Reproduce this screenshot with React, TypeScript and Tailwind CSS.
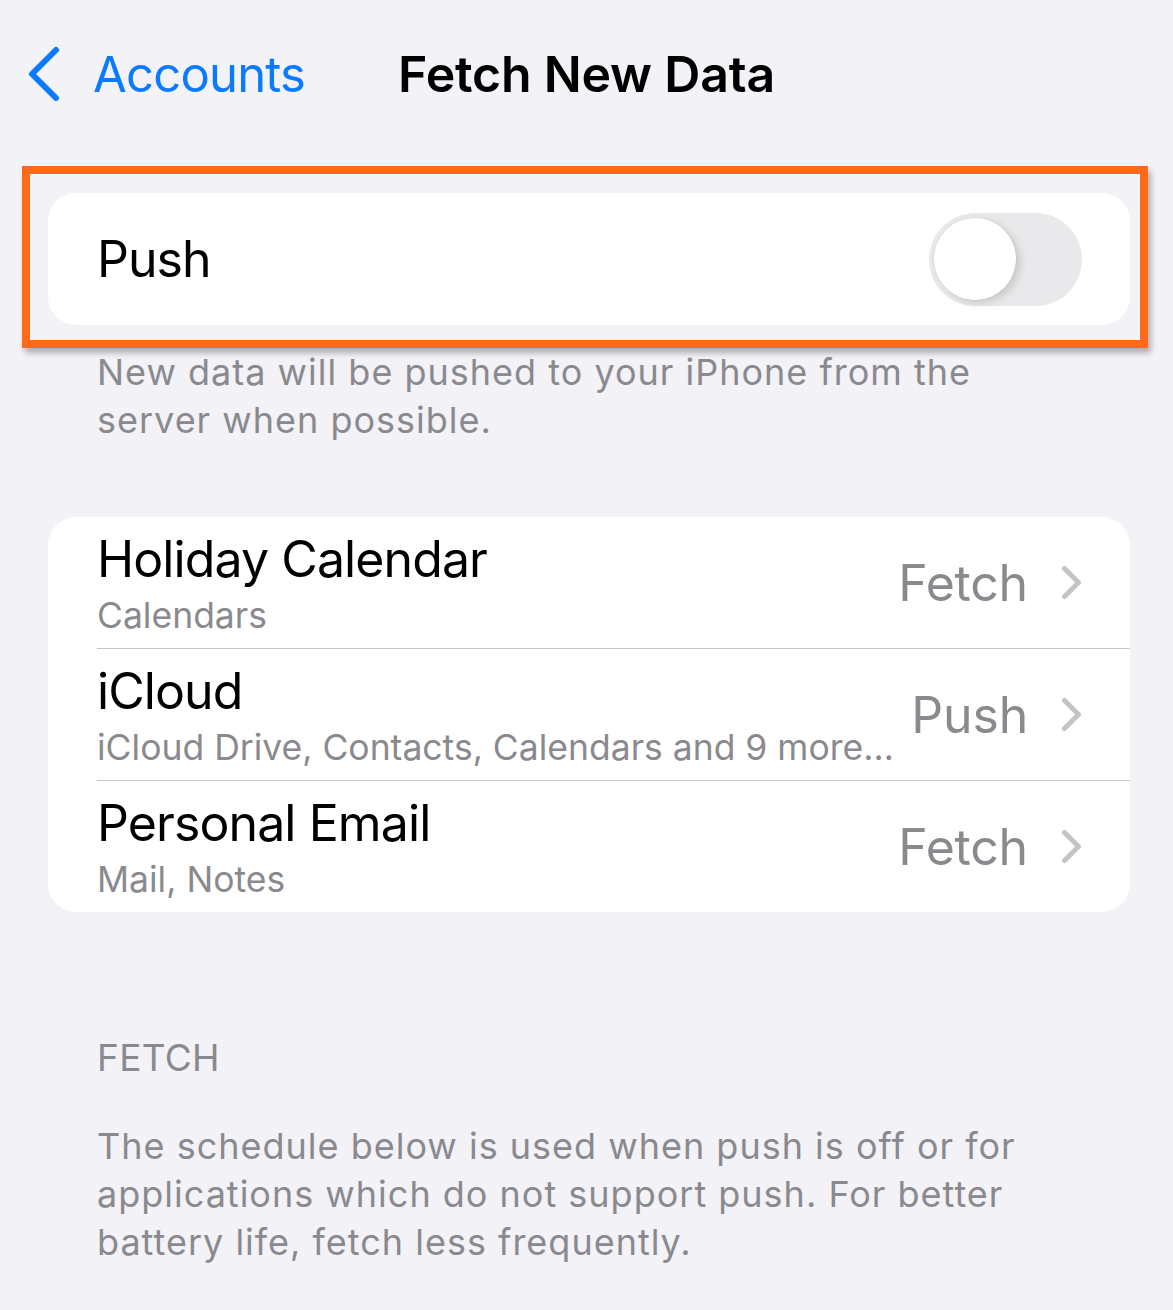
import React from "react";

type Account = {
  name: string;
  detail: string;
  mode: "Fetch" | "Push";
};

const accounts: Account[] = [
  { name: "Holiday Calendar", detail: "Calendars", mode: "Fetch" },
  {
    name: "iCloud",
    detail: "iCloud Drive, Contacts, Calendars and 9 more…",
    mode: "Push",
  },
  { name: "Personal Email", detail: "Mail, Notes", mode: "Fetch" },
];

function BackChevron() {
  return (
    <svg width="34" height="56" viewBox="0 0 34 56" fill="none">
      <path
        d="M29 4 L5 28 L29 52"
        stroke="#0a7aff"
        strokeWidth="6"
        strokeLinecap="round"
        strokeLinejoin="round"
      />
    </svg>
  );
}

function RowChevron() {
  return (
    <svg width="21" height="35" viewBox="0 0 21 35" fill="none">
      <path
        d="M3.5 3.5 L17.5 17.5 L3.5 31.5"
        stroke="#c4c4c7"
        strokeWidth="5"
        strokeLinecap="round"
        strokeLinejoin="round"
      />
    </svg>
  );
}

function Toggle({ on }: { on: boolean }) {
  return (
    <div
      className={`flex h-[93px] w-[153px] items-center rounded-full p-[5px] ${
        on ? "justify-end bg-[#34c759]" : "justify-start bg-[#e9e9eb]"
      }`}
    >
      <div className="h-[82px] w-[82px] rounded-full bg-white shadow-[4px_3px_8px_rgba(0,0,0,0.14),0_0_0_1px_rgba(0,0,0,0.03)]" />
    </div>
  );
}

export default function App() {
  return (
    <div className="min-h-screen w-full bg-[#f2f2f7] pb-10 font-['Inter',sans-serif] antialiased">
      <header className="grid h-[148px] grid-cols-[1fr_auto_1fr] items-center">
        <div className="flex items-center pl-[27px]">
          <BackChevron />
          <span className="ml-[32px] text-[49px] leading-none tracking-[-0.8px] text-[#0a7aff]">
            Accounts
          </span>
        </div>
        <h1 className="text-[50px] font-semibold leading-none tracking-[-0.2px] text-black">
          Fetch New Data
        </h1>
        <div />
      </header>

      {/* highlighted push switch */}
      <div className="ml-[22px] mt-[18px] w-[1126px] border-[8px] border-[#fd6a1c] pb-[15px] pl-[18px] pr-[10px] pt-[19px] shadow-[3px_5px_6px_rgba(0,0,0,0.28)]">
        <div className="flex h-[132px] items-center justify-between rounded-[28px] bg-white pl-[49px] pr-[48px]">
          <span className="text-[50px] leading-none tracking-[-1px] text-black">
            Push
          </span>
          <Toggle on={false} />
        </div>
      </div>

      <p className="ml-[97px] w-[910px] text-[36px] leading-[48px] tracking-[1px] text-[#8a8a8e]">
        New data will be pushed to your iPhone from the server when possible.
      </p>

      <div className="ml-[48px] mt-[73px] w-[1082px] overflow-hidden rounded-[28px] bg-white">
        {accounts.map((account, i) => (
          <div key={account.name} className="flex pl-[49px]">
            <div
              className={`flex min-w-0 flex-1 items-center pr-[48px] ${
                i < accounts.length - 1
                  ? "h-[132px] border-b border-[#c6c6c8]"
                  : "h-[131px]"
              }`}
            >
              <div className="flex min-w-0 flex-1 flex-col self-start pt-[17px]">
                <span className="whitespace-nowrap text-[50px] leading-none tracking-[-0.9px] text-black">
                  {account.name}
                </span>
                <span className="mt-[10px] truncate text-[35.5px] leading-[44px] text-[#8a8a8e]">
                  {account.detail}
                </span>
              </div>
              <span className="ml-[4px] text-[50px] leading-none tracking-[-0.2px] text-[#8a8a8e]">
                {account.mode}
              </span>
              <span className="ml-[33px] flex">
                <RowChevron />
              </span>
            </div>
          </div>
        ))}
      </div>

      <div className="ml-[97px] mt-[127px] text-[37px] leading-none tracking-[0.3px] text-[#8a8a8e]">
        FETCH
      </div>
      <p className="ml-[97px] mt-[46px] w-[940px] text-[36px] leading-[48px] tracking-[1px] text-[#8a8a8e]">
        The schedule below is used when push is off or for applications which
        do not support push. For better battery life, fetch less frequently.
      </p>
    </div>
  );
}
